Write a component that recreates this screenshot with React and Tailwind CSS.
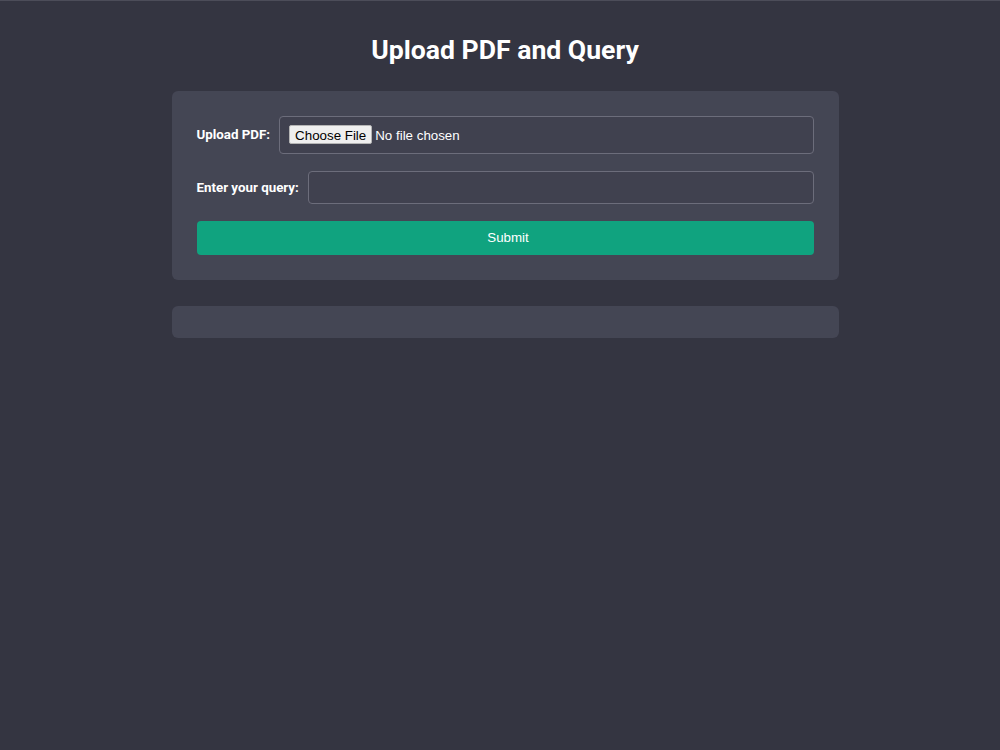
export default function App() {
  return (
    <div className="min-h-[750px] bg-[#343541] border-t border-[#4c4d59] pl-[10px] font-['Roboto',sans-serif] text-white">
      <div className="mx-auto w-[667px] pt-[33px]">
        <h1 className="text-center text-[26.6px] leading-8 font-bold">Upload PDF and Query</h1>

        <form
          onSubmit={(e) => e.preventDefault()}
          className="mt-[25px] rounded-md bg-[#444654] px-[25px] py-[25px]"
        >
          <div className="flex items-center">
            <label className="mr-[9px] text-[13.33px] font-bold">Upload PDF:</label>
            <input
              type="file"
              accept="application/pdf"
              className="h-[38px] flex-1 rounded border border-[#6c6d7b] bg-[#40414f] px-[9px] py-[8px] font-['Liberation_Sans',Arial,sans-serif] text-[13.33px] text-white file:mr-[3px] file:h-[19px] file:rounded-[2px] file:border file:border-[#b5b5b5] file:bg-[#efefef] file:px-[5px] file:text-black"
            />
          </div>

          <div className="mt-[17px] flex items-center">
            <label className="mr-[9px] text-[13.33px] font-bold">Enter your query:</label>
            <input
              type="text"
              className="h-[33px] flex-1 rounded border border-[#6c6d7b] bg-[#40414f] px-2 font-['Liberation_Sans',Arial,sans-serif] text-sm text-white outline-none"
            />
          </div>

          <button
            type="submit"
            className="mt-[17px] h-[34px] w-full rounded bg-[#10a37f] pl-1.5 font-['Liberation_Sans',Arial,sans-serif] text-[13.33px] text-white"
          >
            Submit
          </button>
        </form>

        <div className="mt-[26px] h-[32px] rounded-md bg-[#444654]"></div>
      </div>
    </div>
  );
}
